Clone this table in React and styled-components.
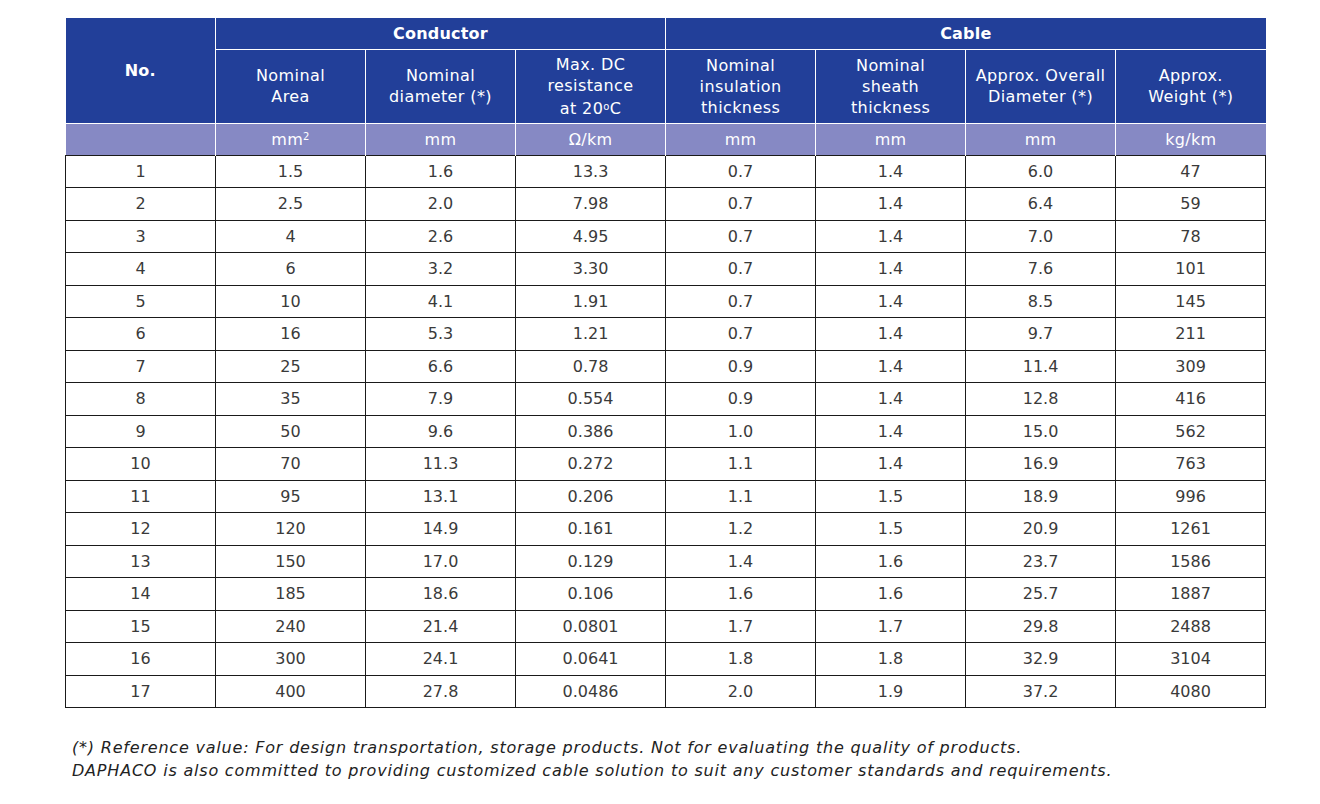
import styled, { createGlobalStyle } from "styled-components";

const GlobalStyle = createGlobalStyle`
    body {
        margin: 0;
        background: #ffffff;
        font-family: "DejaVu Sans", "Liberation Sans", Arial, sans-serif;
        color: #333333;
    }
`;

const rows = [
    [1, "1.5", "1.6", "13.3", "0.7", "1.4", "6.0", "47"],
    [2, "2.5", "2.0", "7.98", "0.7", "1.4", "6.4", "59"],
    [3, "4", "2.6", "4.95", "0.7", "1.4", "7.0", "78"],
    [4, "6", "3.2", "3.30", "0.7", "1.4", "7.6", "101"],
    [5, "10", "4.1", "1.91", "0.7", "1.4", "8.5", "145"],
    [6, "16", "5.3", "1.21", "0.7", "1.4", "9.7", "211"],
    [7, "25", "6.6", "0.78", "0.9", "1.4", "11.4", "309"],
    [8, "35", "7.9", "0.554", "0.9", "1.4", "12.8", "416"],
    [9, "50", "9.6", "0.386", "1.0", "1.4", "15.0", "562"],
    [10, "70", "11.3", "0.272", "1.1", "1.4", "16.9", "763"],
    [11, "95", "13.1", "0.206", "1.1", "1.5", "18.9", "996"],
    [12, "120", "14.9", "0.161", "1.2", "1.5", "20.9", "1261"],
    [13, "150", "17.0", "0.129", "1.4", "1.6", "23.7", "1586"],
    [14, "185", "18.6", "0.106", "1.6", "1.6", "25.7", "1887"],
    [15, "240", "21.4", "0.0801", "1.7", "1.7", "29.8", "2488"],
    [16, "300", "24.1", "0.0641", "1.8", "1.8", "32.9", "3104"],
    [17, "400", "27.8", "0.0486", "2.0", "1.9", "37.2", "4080"],
];

const App = () => {
    const subHeads = [
        ["Nominal", "Area"],
        ["Nominal", "diameter (*)"],
        ["Max. DC", "resistance", <>at 20<Deg>o</Deg>C</>],
        ["Nominal", "insulation", "thickness"],
        ["Nominal", "sheath", "thickness"],
        ["Approx. Overall", "Diameter (*)"],
        ["Approx.", "Weight (*)"],
    ];
    const units = ["", <>mm<sup>2</sup></>, "mm", "Ω/km", "mm", "mm", "mm", "kg/km"];

    return (
        <Page>
            <GlobalStyle />
            <Table>
                <colgroup>
                    {Array.from({ length: 8 }).map((_, i) => <col key={i} style={{ width: 150 }} />)}
                </colgroup>
                <thead>
                    <GroupRow>
                        <HeadCell rowSpan={2} $bold>No.</HeadCell>
                        <HeadCell colSpan={3} $bold>Conductor</HeadCell>
                        <HeadCell colSpan={4} $bold>Cable</HeadCell>
                    </GroupRow>
                    <LabelRow>
                        {subHeads.map((lines, i) => (
                            <HeadCell key={i}>
                                {lines.map((l, j) => <Line key={j}>{l}</Line>)}
                            </HeadCell>
                        ))}
                    </LabelRow>
                    <UnitRow>
                        {units.map((u, i) => <UnitCell key={i}>{u}</UnitCell>)}
                    </UnitRow>
                </thead>
                <tbody>
                    {rows.map((r) => (
                        <BodyRow key={r[0]}>
                            {r.map((v, i) => <Cell key={i}>{v}</Cell>)}
                        </BodyRow>
                    ))}
                </tbody>
            </Table>
            <Note>
                <div>(*) Reference value: For design transportation, storage products. Not for evaluating the quality of products.</div>
                <div>DAPHACO is also committed to providing customized cable solution to suit any customer standards and requirements.</div>
            </Note>
        </Page>
    );
}

const Page = styled.div`
    padding: 18px 0 0 65px;
    width: 1320px;
    box-sizing: border-box;
`;

const Table = styled.table`
    border-collapse: collapse;
    table-layout: fixed;
    width: 1200px;
    font-size: 16px;
`;

const GroupRow = styled.tr`
    height: 31px;
`;

const LabelRow = styled.tr`
    height: 74px;
`;

const HeadCell = styled.th`
    background: #223f99;
    color: #ffffff;
    border: 1px solid #ffffff;
    border-top: none;
    font-weight: ${(p) => (p.$bold ? 700 : 400)};
    letter-spacing: ${(p) => (p.$bold ? "0.2px" : "0.4px")};
    padding: 0;
    text-align: center;
    vertical-align: middle;
    line-height: 21px;

    &:first-child {
        border-left: none;
    }
    &:last-child {
        border-right: none;
    }
`;

const Line = styled.div`
    white-space: nowrap;
`;

const Deg = styled.span`
    font-size: 10px;
    vertical-align: 4px;
`;

const UnitRow = styled.tr`
    height: 32px;
`;

const UnitCell = styled.td`
    background: #8689c4;
    color: #ffffff;
    border: 1px solid #ffffff;
    border-bottom: none;
    text-align: center;
    padding: 0;
    letter-spacing: 0.3px;

    &:first-child {
        border-left: none;
    }
    &:last-child {
        border-right: none;
    }

    sup {
        font-size: 10px;
        vertical-align: 5px;
        line-height: 0;
    }
`;

const BodyRow = styled.tr`
    height: 32.5px;
`;

const Cell = styled.td`
    border: 1px solid #1a1a1a;
    text-align: center;
    padding: 0;
    color: #3a3a3a;
`;

const Note = styled.div`
    margin: 28px 0 0 7px;
    font-style: italic;
    font-size: 16px;
    line-height: 23px;
    letter-spacing: 0.8px;
    color: #222222;
`;

export default App;
